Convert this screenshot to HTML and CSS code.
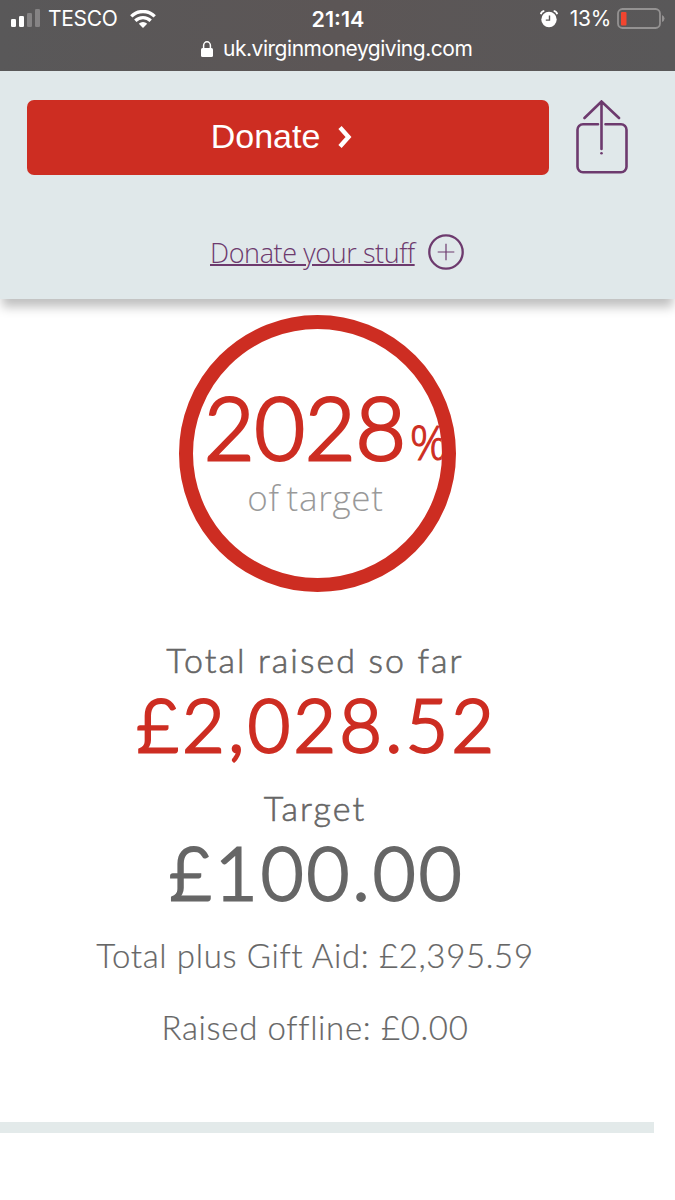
FILE: index.html
```
<!DOCTYPE html>
<html lang="en">
<head>
	<meta charset="utf-8">
	<title>Virgin Money Giving</title>
	<link rel="stylesheet" href="styles.css">
</head>
<body>
	<div class="browser-bar">
		<div class="status">
			<div class="status-left">
				<svg class="signal" width="30" height="20" viewBox="0 0 30 20">
					<rect x="0" y="10" width="5" height="8" rx="1.3" fill="#fff"/>
					<rect x="8" y="7" width="5" height="11" rx="1.3" fill="#fff"/>
					<rect x="16" y="4" width="5" height="14" rx="1.3" fill="#858384"/>
					<rect x="24" y="0" width="5" height="18" rx="1.3" fill="#858384"/>
				</svg>
				<span class="carrier">TESCO</span>
				<svg class="wifi" width="26" height="19" viewBox="0 0 26 19" fill="none" stroke="#fff" stroke-width="3.3">
					<path d="M1.3 6.3a16.6 16.6 0 0 1 23.4 0"/>
					<path d="M5.3 10.8a11 11 0 0 1 15.4 0"/>
					<path d="M13 18l-4.2-4.2a6 6 0 0 1 8.4 0z" fill="#fff" stroke="none"/>
				</svg>
			</div>
			<span class="time">21:14</span>
			<div class="status-right">
				<svg class="alarm" width="18" height="18" viewBox="0 0 18 18">
					<circle cx="9" cy="9.5" r="7.7" fill="#fff"/>
					<path d="M9.5 5.5v4.6H5.8" fill="none" stroke="#5a5858" stroke-width="1.4"/>
					<path d="M.8 4.2Q1.4 1.4 4.3.9M17.2 4.2Q16.6 1.4 13.7.9" fill="none" stroke="#fff" stroke-width="1.8"/>
				</svg>
				<span class="percent">13%</span>
				<svg class="battery" width="48" height="22" viewBox="0 0 48 22">
					<rect x="1" y="1" width="42" height="19" rx="4.5" fill="none" stroke="#949292" stroke-width="1.8"/>
					<rect x="4" y="4" width="5.5" height="13.5" rx="1" fill="#f2452f"/>
					<path d="M45 7q2.5 1 2.5 3.5T45 14z" fill="#949292"/>
				</svg>
			</div>
		</div>
		<div class="address">
			<svg width="12" height="16" viewBox="0 0 12 16">
				<rect x="0" y="7" width="12" height="9" rx="1.5" fill="#fff"/>
				<path d="M2.6 7.5V4.6a3.4 3.8 0 0 1 6.8 0v2.9" fill="none" stroke="#fff" stroke-width="1.5"/>
			</svg>
			<span class="url">uk.virginmoneygiving.com</span>
		</div>
	</div>

	<header class="donate-panel">
		<div class="donate-row">
			<button class="donate-button">
				<span>Donate</span>
				<svg width="14" height="22" viewBox="0 0 14 22" fill="none" stroke="#fff" stroke-width="4.4">
					<path d="M2 1.5l8.5 9.5L2 20.5"/>
				</svg>
			</button>
			<svg class="share" width="52" height="75" viewBox="0 0 52 75" fill="none" stroke="#6d3a6e" stroke-width="2.6" stroke-linecap="round">
				<path d="M22 24.3H7a5.5 5.5 0 0 0-5.5 5.5v37a5.5 5.5 0 0 0 5.5 5.5h38a5.5 5.5 0 0 0 5.5-5.5v-37a5.5 5.5 0 0 0-5.5-5.5H29.5"/>
				<path d="M8.5 18L25.5 1.5 43 18M25.5 1.5V49"/>
				<path d="M25.5 53.2v.1"/>
			</svg>
		</div>
		<div class="stuff-row">
			<a class="stuff-link">Donate your stuff</a>
			<svg width="36" height="36" viewBox="0 0 36 36" fill="none" stroke="#6d3a6e">
				<circle cx="18" cy="18" r="16.7" stroke-width="2.3"/>
				<path d="M18 9.7v16.6M9.7 18h16.6" stroke-width="1.2"/>
			</svg>
		</div>
	</header>

	<main class="totals">
		<div class="progress">
			<div class="progress-value">2028<span class="progress-sign">%</span></div>
			<div class="progress-label">of target</div>
		</div>
		<div class="label label-raised">Total raised so far</div>
		<div class="amount amount-raised">£2,028.52</div>
		<div class="label label-target">Target</div>
		<div class="amount amount-target">£100.00</div>
		<div class="detail detail-gift">Total plus Gift Aid: £2,395.59</div>
		<div class="detail detail-offline">Raised offline: £0.00</div>
	</main>
	<div class="divider"></div>
</body>
</html>
```

FILE: styles.css
```
* {
  box-sizing: border-box;
}

body {
  margin: 0;
  background: #fff;
  font-family: Lato, "Open Sans", sans-serif;
  color: #666;
  overflow: hidden;
}

svg {
  display: block;
  flex: none;
}

.browser-bar {
  height: 71px;
  background: linear-gradient(90deg, #595859, #5c5656 50%, #595859);
  color: #fff;
  font-family: Inter, sans-serif;
  line-height: 24px;
}

.status {
  display: grid;
  grid-template-columns: 1fr auto 1fr;
  padding: 7px 10px 0 11px;
}

.status-left,
.status-right {
  display: flex;
  align-items: center;
}

.status-right {
  justify-content: flex-end;
}

.alarm {
  margin-right: 12px;
}

.carrier {
  margin: 0 12px 0 7px;
  font-size: 21px;
  letter-spacing: -0.3px;
}

.time {
  font-size: 21.5px;
  font-weight: 600;
}

.percent {
  margin-right: 6px;
  font-size: 21px;
  letter-spacing: -0.3px;
}

.address {
  display: flex;
  align-items: center;
  gap: 10px;
  padding: 6px 0 0 201px;
}

.url {
  font-size: 21px;
  letter-spacing: -0.47px;
}

.donate-panel {
  position: relative;
  height: 228px;
  padding: 29px 27px 0;
  background: #e0e8ea;
  box-shadow: 0 10px 10px -2px rgba(0, 0, 0, 0.25);
}

.donate-row {
  display: flex;
  gap: 27px;
}

.donate-button {
  display: flex;
  align-items: center;
  justify-content: center;
  gap: 18px;
  width: 522px;
  height: 75px;
  padding: 0 13px 2px 0;
  border: none;
  border-radius: 7px;
  background: #cd2d22;
  color: #fff;
  font-family: "Liberation Sans", Arial, sans-serif;
  font-size: 34px;
}

.stuff-row {
  display: flex;
  align-items: center;
  height: 36px;
  margin-top: 59px;
  padding-left: 183px;
  gap: 13px;
}

.stuff-link {
  width: 205px;
  font-family: "Open Sans", sans-serif;
  font-size: 27px;
  font-weight: 300;
  letter-spacing: -0.4px;
  white-space: nowrap;
  color: #6d3a6e;
  text-decoration: underline;
  text-decoration-thickness: 2px;
}

.totals {
  width: 630px;
  padding-top: 16px;
  text-align: center;
}

.progress {
  width: 277px;
  height: 277px;
  margin: 0 0 0 179px;
  padding-top: 58px;
  border: 14px solid #cd2d22;
  border-radius: 50%;
  overflow: hidden;
}

/* light weight thickened by a stroke */
.progress-value {
  padding-left: 11px;
  font-size: 87px;
  font-weight: 300;
  line-height: 80px;
  text-align: left;
  white-space: nowrap;
  color: #cd2d22;
  -webkit-text-stroke: 3px #cd2d22;
}

.progress-sign {
  margin-left: 4px;
  font-family: "Open Sans", sans-serif;
  font-size: 47px;
  -webkit-text-stroke-width: 1px;
}

.progress-label {
  margin: -6px 4px 0 0;
  font-family: "Open Sans", sans-serif;
  font-size: 35px;
  font-weight: 300;
  line-height: 44px;
  letter-spacing: 0.7px;
  word-spacing: -3px;
  color: #999;
}

.label {
  font-size: 34px;
  font-weight: 300;
  line-height: 40px;
  letter-spacing: 2.1px;
  -webkit-text-stroke: 0.6px #666;
}

.label-raised {
  margin-top: 48px;
}

.label-target {
  margin-top: 20px;
}

.amount {
  padding-left: 4px;
  font-size: 73px;
  font-weight: 300;
  line-height: 88px;
  letter-spacing: 3.5px;
  -webkit-text-stroke: 2.8px;
}

.amount-raised {
  color: #cd2d22;
}

.detail {
  font-size: 33px;
  font-weight: 300;
  line-height: 40px;
  letter-spacing: 0.65px;
  -webkit-text-stroke: 0.2px #666;
}

.detail-gift {
  margin-top: 19px;
}

.detail-offline {
  margin-top: 32px;
}

.divider {
  width: 654px;
  height: 11px;
  margin-top: 75px;
  background: #e3eaea;
}
```
